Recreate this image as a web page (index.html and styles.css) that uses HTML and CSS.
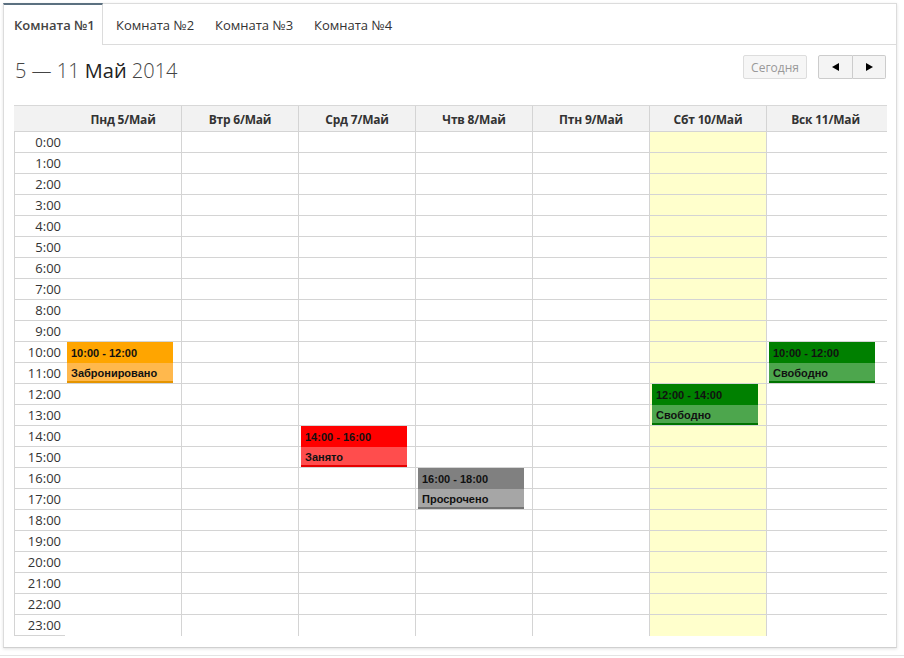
FILE: index.html
```html
<!DOCTYPE html>
<html lang="ru">
<head>
<meta charset="utf-8">
<title>Календарь</title>
<link rel="stylesheet" href="styles.css">
</head>
<body>
<div class="panel">
  <ul class="tabs">
    <li class="tab active">Комната №1</li>
    <li class="tab">Комната №2</li>
    <li class="tab">Комната №3</li>
    <li class="tab">Комната №4</li>
  </ul>
  <div class="toolbar">
    <h2 class="title">5 — 11 <b>Май</b> 2014</h2>
    <div class="buttons">
      <button class="btn today" disabled>Сегодня</button>
      <div class="btn-group">
        <button class="btn nav"><svg width="8" height="8" viewBox="0 0 8 8"><path d="M7 0 L7 8 L0 4 Z" fill="#000"/></svg></button>
        <button class="btn nav"><svg width="8" height="8" viewBox="0 0 8 8"><path d="M1 0 L1 8 L8 4 Z" fill="#000"/></svg></button>
      </div>
    </div>
  </div>
  <div class="cal">
    <div class="head">
      <div class="hcell time-h"></div>
      <div class="hcell first">Пнд 5/Май</div>
      <div class="hcell">Втр 6/Май</div>
      <div class="hcell">Срд 7/Май</div>
      <div class="hcell">Чтв 8/Май</div>
      <div class="hcell">Птн 9/Май</div>
      <div class="hcell">Сбт 10/Май</div>
      <div class="hcell last">Вск 11/Май</div>
    </div>
    <div class="body">
      <div class="times" id="times"></div>
      <div class="day first" data-day="0"></div>
      <div class="day" data-day="1"></div>
      <div class="day" data-day="2"></div>
      <div class="day" data-day="3"></div>
      <div class="day" data-day="4"></div>
      <div class="day today-col" data-day="5"></div>
      <div class="day last" data-day="6"></div>
    </div>
  </div>
</div>
<div class="below"></div>
<script src="app.js"></script>
</body>
</html>
```
FILE: app.js
```js
(function () {
  var times = document.getElementById('times');
  for (var h = 0; h < 24; h++) {
    var t = document.createElement('div');
    t.className = 'tslot';
    t.textContent = h + ':00';
    times.appendChild(t);
  }
  var days = document.querySelectorAll('.day');
  days.forEach(function (d) {
    for (var h = 0; h < 24; h++) {
      var s = document.createElement('div');
      s.className = h === 23 ? 'slot end' : 'slot';
      d.appendChild(s);
    }
  });
  var events = [
    { day: 0, start: 10, end: 12, label: '10:00 - 12:00', status: 'Забронировано', cls: 'booked' },
    { day: 2, start: 14, end: 16, label: '14:00 - 16:00', status: 'Занято', cls: 'busy' },
    { day: 3, start: 16, end: 18, label: '16:00 - 18:00', status: 'Просрочено', cls: 'expired' },
    { day: 5, start: 12, end: 14, label: '12:00 - 14:00', status: 'Свободно', cls: 'free' },
    { day: 6, start: 10, end: 12, label: '10:00 - 12:00', status: 'Свободно', cls: 'free' }
  ];
  events.forEach(function (e) {
    var el = document.createElement('div');
    el.className = 'event ' + e.cls;
    el.style.top = (e.start * 21) + 'px';
    el.innerHTML = '<div class="ev-time">' + e.label + '</div><div class="ev-status">' + e.status + '</div>';
    days[e.day].appendChild(el);
  });
})();
```
FILE: styles.css
```css
html, body {
  margin: 0;
  padding: 0;
  background: #fff;
}
body {
  font-family: "Open Sans", "Liberation Sans", sans-serif;
  color: #333;
}
.panel {
  margin: 3px 7px 0 3px;
  height: 645px;
  border: 1px solid #dcdcdc;
  border-bottom-color: #d0d0d0;
  box-shadow: 0 1px 3px rgba(0, 0, 0, 0.12);
  box-sizing: border-box;
  background: #fff;
}
.below {
  margin-top: 7px;
  border-top: 1px solid #e4e4e4;
}
.tabs {
  list-style: none;
  margin: 0;
  padding: 0;
  display: flex;
  height: 40px;
  border-bottom: 1px solid #dcdcdc;
}
.tab {
  width: 99px;
  box-sizing: border-box;
  display: flex;
  align-items: center;
  padding-left: 13px;
  font-size: 13px;
  color: #333;
  padding-top: 1px;
}
.tab.active {
  font-weight: 600;
  color: #444;
  border-top: 2px solid #5b7080;
  border-right: 1px solid #dcdcdc;
  border-left: 1px solid #dcdcdc;
  margin-top: -1px;
  margin-left: -1px;
  height: 42px;
  background: #fff;
  padding-top: 0;
  padding-left: 10px;
  width: 100px;
}
.toolbar {
  display: flex;
  justify-content: space-between;
  align-items: flex-start;
  padding: 10px 10px 0 10px;
  height: 60px;
  box-sizing: border-box;
}
.title {
  margin: 0;
  font-size: 20px;
  font-weight: 300;
  color: #444;
  line-height: 30px;
  padding-top: 1px;
  padding-left: 1px;
}
.title b {
  font-weight: 400;
  color: #222;
}
.buttons {
  display: flex;
  gap: 11px;
}
.btn {
  font-family: "Open Sans", "Liberation Sans", sans-serif;
  height: 24px;
  border: 1px solid #ccc;
  background: #f4f4f4;
  box-sizing: border-box;
  padding: 0;
  font-size: 12px;
  border-radius: 2px;
}
.btn.today {
  width: 64px;
  color: #999;
  background: #f6f6f6;
  border-color: #ddd;
}
.btn-group {
  display: flex;
}
.btn.nav {
  width: 35px;
  display: flex;
  align-items: center;
  justify-content: center;
  background: #f4f4f4;
}
.btn.nav:first-child {
  border-radius: 2px 0 0 2px;
}
.btn.nav:last-child {
  border-left: none;
  width: 33px;
  border-radius: 0 2px 2px 0;
}
.cal {
  margin-left: 10px;
  width: 873px;
}
.head {
  display: grid;
  grid-template-columns: 51px repeat(7, 117px) 3px;
  height: 26px;
  background: #f2f2f2;
  border-top: 1px solid #d8d8d8;
  box-sizing: border-box;
}
.hcell {
  font-size: 12px;
  font-weight: bold;
  color: #333;
  display: flex;
  align-items: center;
  justify-content: center;
  border-right: 1px solid #d4d4d4;
  padding-top: 1px;
  letter-spacing: -0.2px;
}
.hcell.time-h {
  border-right: none;
}
.hcell.last {
  border-right: none;
}
.body {
  display: grid;
  grid-template-columns: 51px repeat(7, 117px);
  border-top: 1px solid #d4d4d4;
}
.times {
  border-left: 1px solid #d4d4d4;
}
.tslot {
  height: 20px;
  border-bottom: 1px solid #d4d4d4;
  font-size: 13px;
  line-height: 20px;
  text-align: right;
  padding-right: 4px;
  color: #333;
}
.day {
  position: relative;
  border-right: 1px solid #d4d4d4;
}
.day.last {
  border-right: none;
  margin-right: -3px;
}
.day.today-col {
  background: #ffffcc;
}
.slot {
  height: 20px;
  border-bottom: 1px solid #d4d4d4;
}
.slot.end {
  border-bottom: none;
}
.event {
  position: absolute;
  left: 2px;
  width: 106px;
  height: 41px;
  font-family: "Liberation Sans", Arial, sans-serif;
  font-size: 11px;
  font-weight: bold;
  color: #111;
  box-sizing: border-box;
  border-bottom: 2px solid;
}
.ev-time {
  height: 21px;
  line-height: 22px;
  padding-left: 4px;
}
.ev-status {
  height: 18px;
  line-height: 20px;
  padding-left: 4px;
}
.booked { border-color: #e59400; }
.booked .ev-time { background: #ffa500; }
.booked .ev-status { background: #ffb84d; }
.busy { border-color: #e60000; }
.busy .ev-time { background: #ff0000; }
.busy .ev-status { background: #ff4d4d; }
.expired { border-color: #737373; }
.expired .ev-time { background: #808080; }
.expired .ev-status { background: #a6a6a6; }
.free { border-color: #007300; }
.free .ev-time { background: #008000; }
.free .ev-status { background: #4da64d; }
```
